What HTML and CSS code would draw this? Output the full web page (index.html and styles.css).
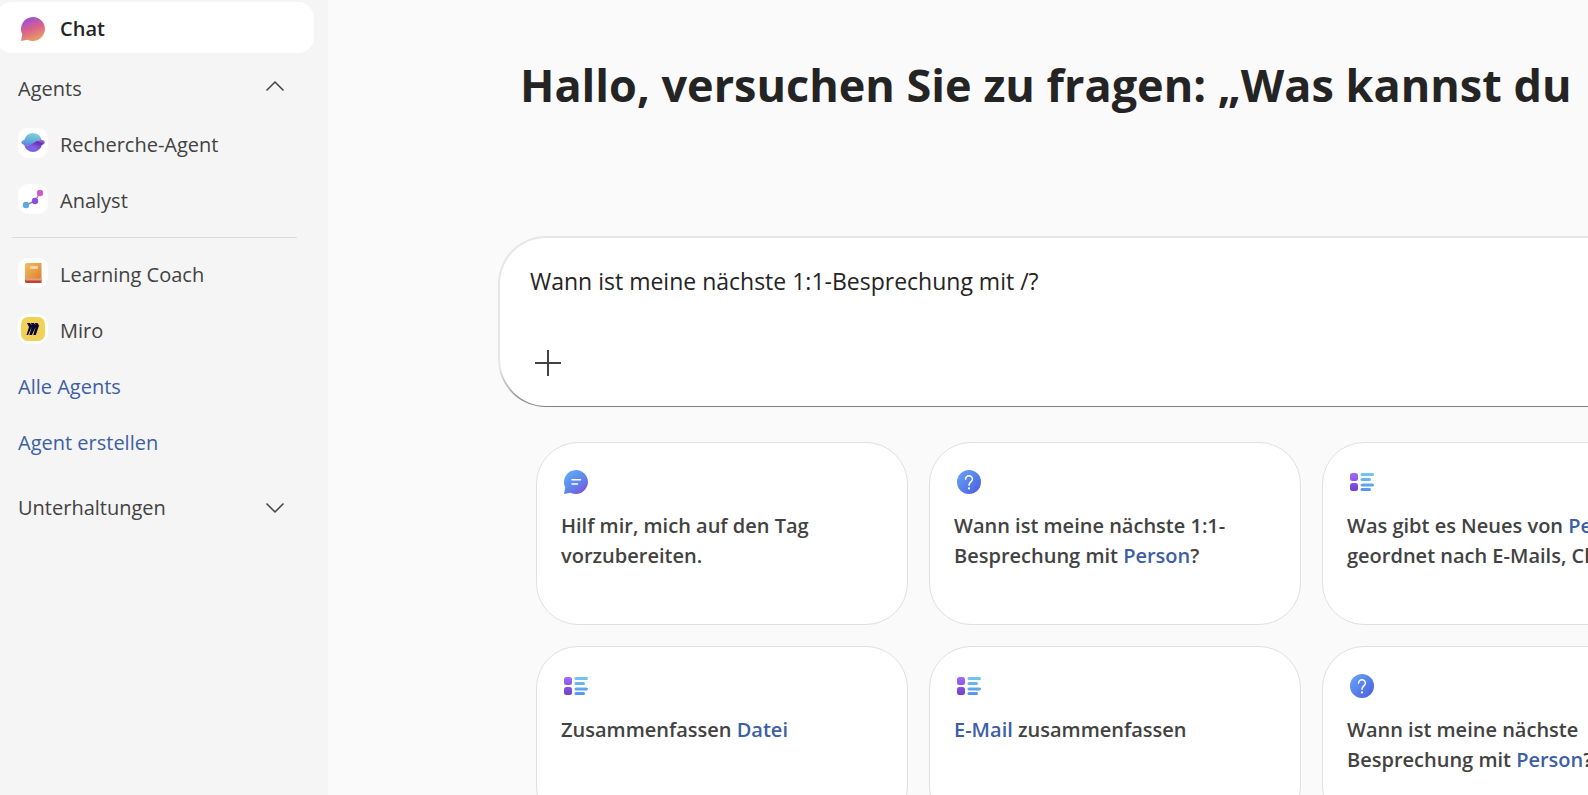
FILE: index.html
```html
<!DOCTYPE html>
<html lang="de">
<head>
<meta charset="utf-8">
<meta name="viewport" content="width=device-width, initial-scale=1">
<title>Chat</title>
<link rel="stylesheet" href="styles.css">
</head>
<body>
<svg class="defs" aria-hidden="true">
  <defs>
    <linearGradient id="g-chat" x1="0.2" y1="0" x2="0.6" y2="1"><stop offset="0" stop-color="#8f50e6"/><stop offset="0.5" stop-color="#d9608a"/><stop offset="1" stop-color="#e8a066"/></linearGradient>
    <linearGradient id="g-bubble" x1="0.1" y1="0" x2="0.85" y2="1"><stop offset="0" stop-color="#62b0f8"/><stop offset="0.55" stop-color="#5f86ec"/><stop offset="1" stop-color="#8350d8"/></linearGradient>
    <linearGradient id="g-help" x1="0" y1="0" x2="1" y2="1"><stop offset="0" stop-color="#67a8f8"/><stop offset="1" stop-color="#4a5bdc"/></linearGradient>
    <linearGradient id="g-dots" x1="0" y1="3" x2="0" y2="21" gradientUnits="userSpaceOnUse"><stop offset="0" stop-color="#a06cf8"/><stop offset="1" stop-color="#7040cc"/></linearGradient>
    <linearGradient id="g-lines" x1="0" y1="3" x2="0" y2="21" gradientUnits="userSpaceOnUse"><stop offset="0" stop-color="#74c8ee"/><stop offset="1" stop-color="#5694ec"/></linearGradient>
    <linearGradient id="g-planet-top" x1="0.5" y1="0" x2="0.3" y2="1"><stop offset="0" stop-color="#80d2d4"/><stop offset="0.6" stop-color="#62ace0"/><stop offset="1" stop-color="#5b80e2"/></linearGradient>
    <linearGradient id="g-planet-low" x1="0.2" y1="1" x2="0.9" y2="0.1"><stop offset="0" stop-color="#5f6ce6"/><stop offset="0.4" stop-color="#8a5ee0"/><stop offset="0.8" stop-color="#5e34b4"/><stop offset="1" stop-color="#b054d4"/></linearGradient>
    <linearGradient id="g-book" x1="0" y1="0" x2="1" y2="1"><stop offset="0" stop-color="#f0bf60"/><stop offset="1" stop-color="#e07c2c"/></linearGradient>
    <symbol id="i-list" viewBox="0 0 24 24">
      <g fill="url(#g-dots)"><rect x="0" y="3" width="8" height="8" rx="2.5"/><rect x="0" y="13" width="8" height="8" rx="2.5"/></g>
      <g fill="url(#g-lines)"><rect x="10.5" y="3" width="13.5" height="3" rx="1.5"/><rect x="10.5" y="8" width="10.5" height="3" rx="1.5"/><rect x="10.5" y="13.5" width="13.5" height="3" rx="1.5"/><rect x="10.5" y="18" width="10.5" height="3" rx="1.5"/></g>
    </symbol>
    <symbol id="i-help" viewBox="0 0 24 24">
      <circle cx="12" cy="12" r="12" fill="url(#g-help)"/>
      <path d="M8.6 9.2a3.4 3.4 0 1 1 6.8 0c0 2.6-3.4 2.9-3.4 6" fill="none" stroke="#fff" stroke-width="1.5" stroke-linecap="round"/><circle cx="12" cy="18.4" r="1.1" fill="#fff"/>
    </symbol>
  </defs>
</svg>
<div class="app">
  <nav class="sidebar" aria-label="Navigation">
    <a class="item item-active" href="#chat">
      <svg class="icon" viewBox="0 0 24 24"><path d="M12 0a12 12 0 1 1-5.500 22.700L0 24l1.300-6.500A12 12 0 0 1 12 0z" fill="url(#g-chat)"/></svg>
      Chat
    </a>
    <button class="section" type="button" aria-expanded="true">Agents
      <svg class="chevron" viewBox="0 0 20 20"><path d="M1.500 11.500 10 3l8.500 8.500"/></svg>
    </button>
    <a class="item" href="#recherche">
      <span class="tile"><svg class="icon" viewBox="0 0 24 24"><path d="M3.200 9a9 9 0 0 1 17.600 0c-5 0-7 2-10 4-3 1.800-6 2.200-8 .8C-.5 12.500-.5 10 3.200 9z" fill="url(#g-planet-top)"/><path d="M20.800 9c4 .3 4 3.800 0 5A9 9 0 0 1 3.200 14c3.300 1 6 0 8.800-2 3-2 5.500-3.200 8.800-3z" fill="url(#g-planet-low)"/></svg></span>
      Recherche-Agent
    </a>
    <a class="item" href="#analyst">
      <span class="tile"><svg class="icon" viewBox="0 0 24 24"><path d="M5 18l9-4 5-8" fill="none" stroke="#8a8698" stroke-width="1.400"/><circle cx="5" cy="18" r="3.200" fill="#5ca8e0"/><circle cx="14" cy="14" r="3.200" fill="#904cd4"/><circle cx="19" cy="6" r="3.200" fill="#c95cc8"/></svg></span>
      Analyst
    </a>
    <hr class="rule">
    <a class="item" href="#coach">
      <span class="tile"><svg class="icon" viewBox="0 0 24 24"><path d="M4 3.500Q4 2 5.500 2h15v17.500H4z" fill="url(#g-book)"/><path d="M4 18.500h16.500V22H5.500Q4 22 4 20.500z" fill="#b9472b"/><path d="M4.500 17.500h16v2h-16z" fill="#e69a92"/><rect x="9" y="5" width="8" height="3" rx="1" fill="#f9d3b0"/></svg></span>
      Learning Coach
    </a>
    <a class="item" href="#miro">
      <span class="tile"><svg class="icon" viewBox="0 0 24 24"><rect width="24" height="24" rx="7" fill="#f0d258"/><path d="M6 6h3l1.500 2.500L10 6h3l1.500 2L14 6h2.500L18 8.500 14.800 18h-2.600l2.600-8-4 8H8.300l2.400-8L7 18H5.500L8 10z" fill="#0c0734"/></svg></span>
      Miro
    </a>
    <a class="item item-link" href="#alle">Alle Agents</a>
    <a class="item item-link" href="#neu">Agent erstellen</a>
    <button class="section section-last" type="button" aria-expanded="false">Unterhaltungen
      <svg class="chevron" viewBox="0 0 20 20"><path d="M1.500 5.500 10 14l8.500-8.500"/></svg>
    </button>
  </nav>
  <main class="main">
    <h1 class="title">Hallo, versuchen Sie zu fragen: „Was kannst du</h1>
    <form class="composer">
      <input class="prompt" type="text" aria-label="Nachricht" value="Wann ist meine nächste 1:1-Besprechung mit /?">
      <button class="add" type="button" aria-label="Hinzufügen"><svg class="plus" viewBox="0 0 28 28"><path d="M14 1v26M1 14h26"/></svg></button>
    </form>
    <div class="cards">
      <button class="card" type="button">
        <svg class="icon" viewBox="0 0 24 24"><path d="M12 0a12 12 0 1 1-5.500 22.700L0 24l1.300-6.500A12 12 0 0 1 12 0z" fill="url(#g-bubble)"/><path d="M8 9.700h8.500M8 14h5.500" stroke="#fff" stroke-width="1.500" stroke-linecap="round"/></svg>
        <span>Hilf mir, mich auf den Tag<br>vorzubereiten.</span>
      </button>
      <button class="card" type="button">
        <svg class="icon"><use href="#i-help"/></svg>
        <span>Wann ist meine nächste 1:1-<br>Besprechung mit <b>Person</b>?</span>
      </button>
      <button class="card" type="button">
        <svg class="icon"><use href="#i-list"/></svg>
        <span>Was gibt es Neues von <b>Person</b>,<br>geordnet nach E-Mails, Chats</span>
      </button>
      <button class="card" type="button">
        <svg class="icon"><use href="#i-list"/></svg>
        <span>Zusammenfassen <b>Datei</b></span>
      </button>
      <button class="card" type="button">
        <svg class="icon"><use href="#i-list"/></svg>
        <span><b>E-Mail</b> zusammenfassen</span>
      </button>
      <button class="card" type="button">
        <svg class="icon"><use href="#i-help"/></svg>
        <span>Wann ist meine nächste<br>Besprechung mit <b>Person</b>?</span>
      </button>
    </div>
  </main>
</div>
</body>
</html>
```

FILE: styles.css
```css
* { box-sizing: border-box; }

body {
  margin: 0;
  background: #fafafa;
  color: #424242;
  font: 20px/30px "Segoe UI", "Open Sans", "Noto Sans", sans-serif;
  overflow: hidden;
}

button, input { font: inherit; color: inherit; }

.defs { position: absolute; width: 0; height: 0; }

.app { display: flex; height: 100vh; overflow: hidden; }

.sidebar {
  display: flex;
  flex-direction: column;
  flex: 0 0 328px;
  padding: 2px 14px 0 0;
  background: #f5f5f5;
}

.item {
  display: flex;
  align-items: center;
  gap: 12px;
  height: 56px;
  padding-left: 18px;
  color: #424242;
  text-decoration: none;
}

.item-active {
  height: 51px;
  gap: 15px;
  margin: 0 0 8px -4px;
  padding: 2px 0 0 25px;
  background: #fff;
  border-radius: 16px;
  color: #242424;
  font-weight: 600;
}

.item-link { color: #3d5fa3; }

.icon { display: block; flex: none; width: 24px; height: 24px; }

.tile {
  display: grid;
  place-items: center;
  flex: none;
  width: 30px;
  height: 30px;
  margin-bottom: 4px;
  border-radius: 10px;
  background: #fff;
}

.section {
  display: flex;
  align-items: center;
  justify-content: space-between;
  height: 56px;
  padding: 0 29px 0 18px;
  border: 0;
  background: none;
}

.section-last { margin-top: 9px; }

.chevron { width: 20px; height: 20px; fill: none; stroke: #424242; stroke-width: 1.5; }

.rule {
  width: 285px;
  margin: 8px 0 9px 12px;
  border: 0;
  border-top: 1px solid #dcdcdc;
}

.main { flex: 1; min-width: 0; padding: 54px 0 0 170px; }

.title {
  margin: 0 0 120px 22px;
  color: #242424;
  font-size: 45px;
  line-height: 62px;
  font-weight: 700;
  white-space: nowrap;
}

.composer {
  display: flex;
  flex-direction: column;
  justify-content: space-between;
  align-items: flex-start;
  min-width: 1200px;
  height: 171px;
  padding: 25px 30px 28px;
  border: 2px solid transparent;
  border-bottom-width: 1px;
  border-radius: 48px;
  background:
    linear-gradient(#fff, #fff) padding-box,
    linear-gradient(#e6e6e6 78%, #808080 98%) border-box;
}

.prompt {
  width: 100%;
  height: 36px;
  padding: 0;
  border: 0;
  outline: 0;
  background: none;
  color: #242424;
  font-size: 23px;
}

.add { padding: 1px 4px; border: 0; background: none; }
.plus { display: block; width: 28px; height: 28px; fill: none; stroke: #424242; stroke-width: 2; }

.cards {
  display: grid;
  grid-template-columns: repeat(3, 372px);
  grid-auto-rows: 183px;
  gap: 21px;
  padding: 35px 0 0 38px;
}

.card {
  display: flex;
  flex-direction: column;
  align-items: flex-start;
  gap: 17px;
  padding: 27px 24px;
  border: 1px solid #e0e0e0;
  border-radius: 42px;
  background: #fff;
  text-align: left;
  white-space: nowrap;
  font-weight: 600;
}

.card .icon { margin-left: 3px; }
.card b { color: #3d5fa3; font-weight: inherit; }
```
